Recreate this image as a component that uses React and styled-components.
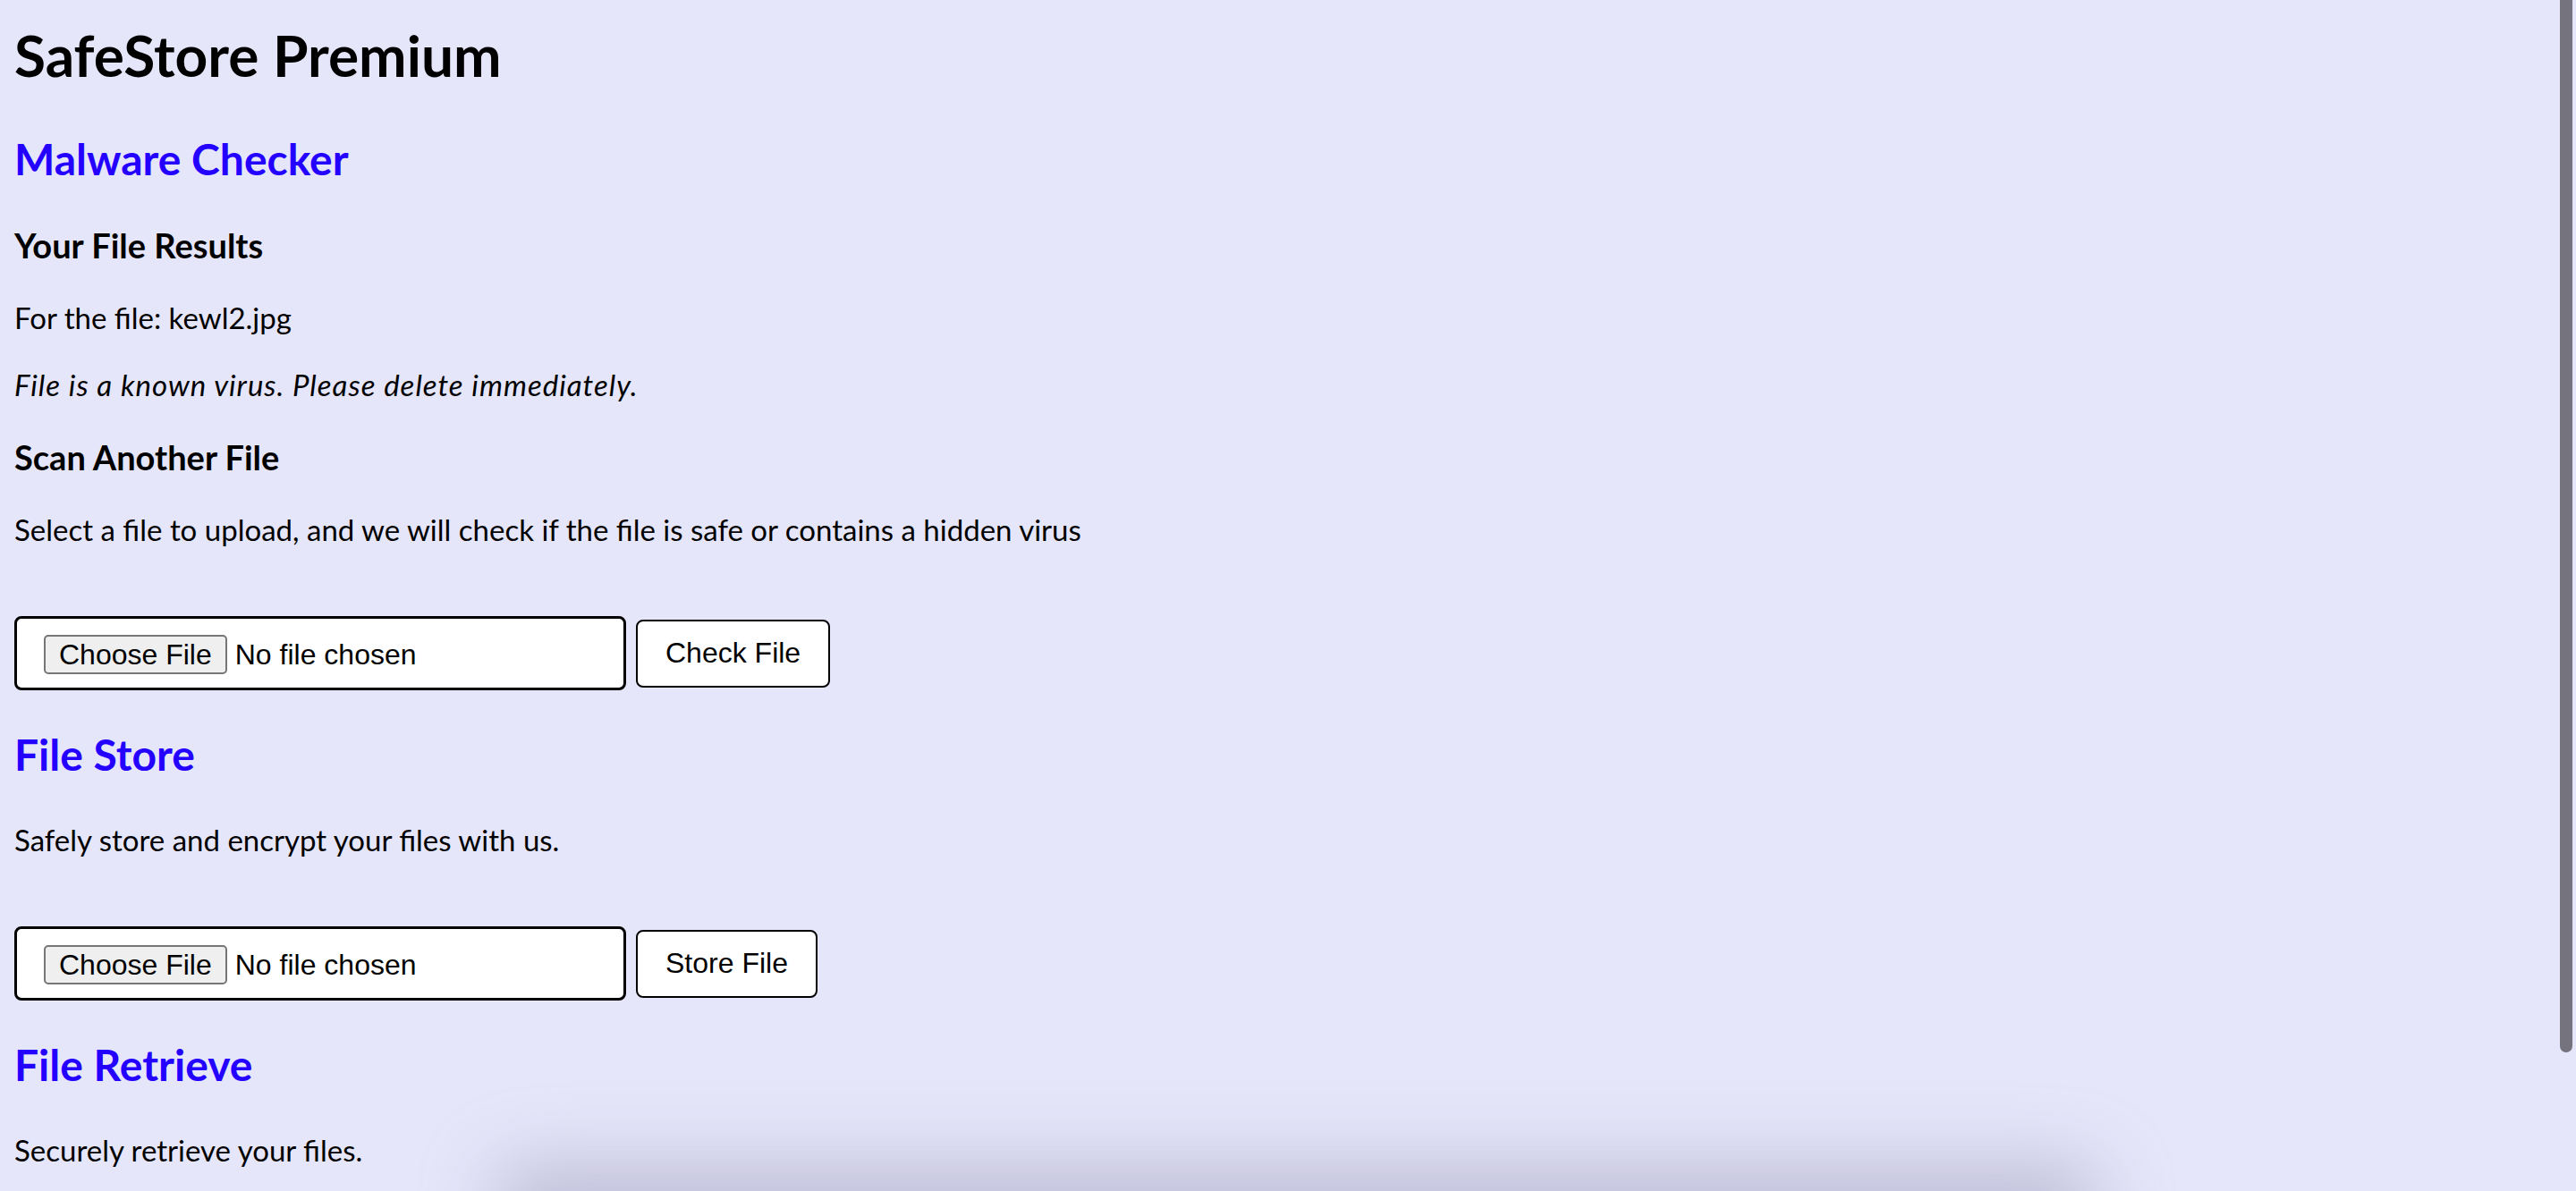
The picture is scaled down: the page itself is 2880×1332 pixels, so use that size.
import styled, { createGlobalStyle } from "styled-components";

const GlobalStyle = createGlobalStyle`
    html, body {
        margin: 0;
        padding: 0;
        background: #e6e6fa;
    }
    body {
        font-family: Lato, "Noto Sans", sans-serif;
        color: #000;
        overflow: hidden;
    }
`;

const Page = styled.main`
    padding: 0 16px;
    min-height: 1332px;
    box-sizing: border-box;
    display: flow-root;
`;

const Title = styled.h1`
    font-size: 64px;
    line-height: 74px;
    font-weight: 700;
    margin: 25px 0 51px;
`;

const SectionTitle = styled.h2`
    font-size: 48px;
    line-height: 56px;
    font-weight: 700;
    color: #2400ff;
    margin: 44px 0 46px;
`;

const SubTitle = styled.h3`
    font-size: 38px;
    line-height: 44px;
    font-weight: 700;
    margin: 37px 0 38px;
`;

const Text = styled.p`
    font-size: 33px;
    line-height: 43px;
    margin: 32px 0;
    font-style: ${(p) => (p.$italic ? "italic" : "normal")};
    letter-spacing: ${(p) => (p.$italic ? "1px" : "normal")};
`;

const UploadForm = styled.form`
    display: flex;
    align-items: center;
    gap: 11px;
    margin: 75px 0 44px;
`;

const FileInput = styled.input`
    box-sizing: border-box;
    width: 684px;
    height: 83px;
    padding: 18px 30px 0;
    background: #fff;
    border: 3px solid #000;
    border-radius: 8px;
    font-family: "Liberation Sans", Arial, sans-serif;
    font-size: 32px;
    color: #000;
    &::file-selector-button {
        font-family: "Liberation Sans", Arial, sans-serif;
        font-size: 32px;
        height: 44px;
        padding: 0 15px;
        margin-right: 9px;
        background: #efefef;
        border: 2px solid #767676;
        border-radius: 5px;
        color: #000;
    }
`;

const SubmitButton = styled.button`
    box-sizing: border-box;
    height: 76px;
    padding: 0 31px;
    background: #fff;
    border: 2px solid #000;
    border-radius: 8px;
    font-family: "Liberation Sans", Arial, sans-serif;
    font-size: 32px;
    color: #000;
`;

const ScrollThumb = styled.div`
    position: fixed;
    top: 0;
    right: 4px;
    width: 14px;
    height: 1177px;
    border-radius: 0 0 7px 7px;
    background: #74737e;
`;

const DockShadow = styled.div`
    position: fixed;
    left: 550px;
    right: 530px;
    bottom: -60px;
    height: 90px;
    border-radius: 40px;
    background: rgba(150, 148, 180, 0.5);
    filter: blur(40px);
    pointer-events: none;
`;

function Upload({ label }) {
    return (
        <UploadForm onSubmit={(e) => e.preventDefault()}>
            <FileInput type="file" />
            <SubmitButton type="submit">{label}</SubmitButton>
        </UploadForm>
    );
}

export default function App() {
    return (
        <>
            <GlobalStyle />
            <Page>
                <Title>SafeStore Premium</Title>

                <SectionTitle>Malware Checker</SectionTitle>
                <SubTitle>Your File Results</SubTitle>
                <Text>For the file: kewl2.jpg</Text>
                <Text $italic>File is a known virus. Please delete immediately.</Text>
                <SubTitle>Scan Another File</SubTitle>
                <Text>
                    Select a file to upload, and we will check if the file is safe or
                    contains a hidden virus
                </Text>
                <Upload label="Check File" />

                <SectionTitle>File Store</SectionTitle>
                <Text>Safely store and encrypt your files with us.</Text>
                <Upload label="Store File" />

                <SectionTitle>File Retrieve</SectionTitle>
                <Text>Securely retrieve your files.</Text>
            </Page>
            <DockShadow />
            <ScrollThumb />
        </>
    );
}
